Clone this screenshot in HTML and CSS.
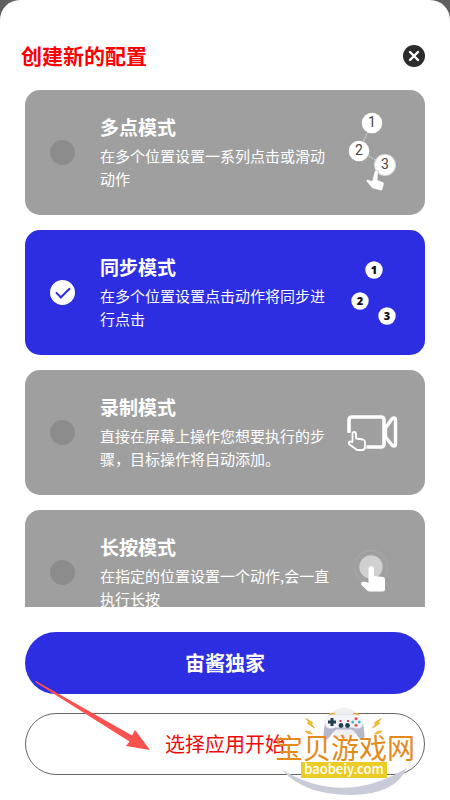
FILE: index.html
```
<!DOCTYPE html>
<html lang="zh-CN">
<head>
    <meta charset="UTF-8">
    <meta name="viewport" content="width=device-width, initial-scale=1.0">
    <title>创建新的配置</title>
    <link rel="stylesheet" href="styles.css">
</head>
<body>
    <form class="sheet">
        <div class="header">
            <h1>创建新的配置</h1>
            <button type="button" class="close" aria-label="关闭">
                <svg viewBox="0 0 22 22">
                    <circle cx="11" cy="11" r="11" fill="#2b2b2b"/>
                    <path d="M7 7l8 8M15 7l-8 8" stroke="#fff" stroke-width="2.4" stroke-linecap="round"/>
                </svg>
            </button>
        </div>

        <div class="modes">
            <label class="card">
                <input type="radio" name="mode" value="multi">
                <span class="text">
                    <span class="name">多点模式</span>
                    <span class="desc">在多个位置设置一系列点击或滑动动作</span>
                </span>
                <svg class="icon" viewBox="0 0 68 85">
                    <path d="M40 13L27 41L53 55" fill="none" stroke="#ddd" stroke-dasharray="2 1"/>
                    <circle cx="40" cy="13" r="10.3" fill="#fff"/>
                    <circle cx="27" cy="41" r="10.3" fill="#fff"/>
                    <circle cx="53" cy="55" r="11" fill="#ddd"/>
                    <circle cx="53" cy="55" r="10" fill="#fff"/>
                    <g class="thin-num">
                        <text x="40" y="17">1</text>
                        <text x="27" y="45">2</text>
                        <text x="53" y="59">3</text>
                    </g>
                    <path d="M42.500 61.500q1.500-2.500 3.700-.8l-.5 9.300 5.300 2q1.500.8 1 2.500l-1.500 5q-.5 1.500-2 1l-8-2-6-7q-1-2.500 1.500-2l4 1.500z" fill="#fff" stroke="#888" stroke-width=".4"/>
                </svg>
            </label>

            <label class="card">
                <input type="radio" name="mode" value="sync" checked>
                <span class="text">
                    <span class="name">同步模式</span>
                    <span class="desc">在多个位置设置点击动作将同步进行点击</span>
                </span>
                <svg class="icon" viewBox="0 0 68 85">
                    <circle cx="42" cy="20" r="8.700" fill="#fff"/>
                    <circle cx="28" cy="51" r="8.700" fill="#fff"/>
                    <circle cx="55" cy="66" r="8.700" fill="#fff"/>
                    <g class="bold-num">
                        <text x="42" y="24">1</text>
                        <text x="28" y="55">2</text>
                        <text x="55" y="70">3</text>
                    </g>
                </svg>
            </label>

            <label class="card">
                <input type="radio" name="mode" value="record">
                <span class="text">
                    <span class="name">录制模式</span>
                    <span class="desc">直接在屏幕上操作您想要执行的步骤，目标操作将自动添加。</span>
                </span>
                <svg class="icon" viewBox="0 0 68 85" fill="none" stroke="#fff" stroke-linejoin="round">
                    <path d="M17 43V30q0-3 3-3h29q3 0 3 3v24q0 3-3 3H34.500" stroke-width="3.600"/>
                    <path d="M53.500 38l6-8.500q1-1.500 2.500-1.500 1.500 0 1.500 2v24q0 2-1.500 2-1.500 0-2.500-1.500L53.500 47z" stroke-width="3.400"/>
                    <path d="M20.500 52V44q0-2 1.700-2t1.800 2v4.500l7 1q2 .5 2 2.500v5q0 3-3 3h-5l-8-6q-1-2.500 1.500-2.500l2.500 1" stroke-width="1.800"/>
                </svg>
            </label>

            <label class="card">
                <input type="radio" name="mode" value="press">
                <span class="text">
                    <span class="name">长按模式</span>
                    <span class="desc">在指定的位置设置一个动作,会一直执行长按</span>
                </span>
                <svg class="icon" viewBox="0 0 68 85">
                    <circle cx="39" cy="37" r="16.500" fill="none" stroke="#aaa" stroke-width=".8"/>
                    <circle cx="39" cy="37" r="11.700" fill="#d0d0d0"/>
                    <path d="M36.500 38.500a2.800 2.800 0 0 1 5.500 0V46l9 1q2 .3 2 2.500v9.500q0 2.500-2.500 2.500H37.500q-1 0-2-.8L29.500 55q-1.500-2.500 1.500-3.200 3-.3 5.500 1.200z" fill="#fff"/>
                </svg>
            </label>
        </div>

        <div class="actions">
            <button type="submit" class="primary">宙酱独家</button>
            <button type="button" class="outline">选择应用开始</button>

            <svg class="arrow" viewBox="0 0 116 70">
                <path d="M0 1L1 0L97 54.500L100 49L115 69L91 65L94.500 60.500z" fill="#fb5250"/>
            </svg>

            <svg class="logo" viewBox="0 0 140 100">
                <circle cx="69" cy="23" r="15.500" fill="#efeff1"/>
                <path d="M6 69Q67 107 132 68Q120 95 75 95Q29 95 6 69z" fill="#c9cbd9"/>
                <path d="M55 14.500h28q4.500 2 5 9 1.500 8 1.500 13 0 4-3 3.500-3-2-6-7-2-3-4-3.500H61.500q-2 .5-4 3.500-3 5-6 7-3 .5-3-3.500 0-5 1.500-13 .5-7 5-9z" fill="#b4b8ca"/>
                <path d="M56 14.500h26q6 1 6 8 0 6-6 6-2 0-4-1H60q-2 1-4 1-6 0-6-6 0-7 6-8z" fill="#f3f4f9"/>
                <path d="M54 14.300q3-1 6-.8M78 13.500q3-.2 6 .8" stroke="#e9ad42" stroke-width="1.600" fill="none"/>
                <path d="M57 18v8M53 22h8" stroke="#213f50" stroke-width="3"/>
                <circle cx="66" cy="25.500" r="2.400" fill="#213f50"/>
                <circle cx="72.500" cy="25.500" r="2.400" fill="#213f50"/>
                <path d="M64.500 21h2M72 21h2" stroke="#cf3e46" stroke-width="1.800"/>
                <circle cx="81" cy="18.700" r="1.500" fill="#e44d55"/>
                <circle cx="81" cy="25.300" r="1.500" fill="#e44d55"/>
                <circle cx="77.700" cy="22" r="1.500" fill="#41bac5"/>
                <circle cx="84.300" cy="22" r="1.500" fill="#41bac5"/>
                <path d="M31 18.500l6.500 4-1 1.500 3 4-7-4.500 1-1.500zM30 31l4.500.5 3 2.500-4.500-.5zM106.500 18.500l-7 4 1 1.500-3 4 7-4.500-1-1.500zM107 31l-4.500.5-3 2.500 4.500-.5z" fill="#f3c21f" stroke="#eba02a" stroke-width=".7"/>
                <text class="logo-name" x="0" y="59">宝贝游戏网</text>
                <rect x="26" y="62" width="86" height="16" fill="#ebcc26"/>
                <text class="logo-url" x="69" y="74">baobeiy.com</text>
            </svg>
        </div>
    </form>
</body>
</html>
```
FILE: styles.css
```
* {
    box-sizing: border-box;
}
body {
    font-family: "Noto Sans CJK SC", sans-serif;
    margin: 0;
    background-color: #606060;
}
.sheet {
    display: flex;
    flex-direction: column;
    height: 100vh;
    background-color: white;
    border-radius: 20px 20px 0 0;
}
.header {
    display: flex;
    justify-content: space-between;
    align-items: center;
    padding: 39px 25px 17px 21px;
}
h1 {
    margin: 0;
    padding-bottom: 2px;
    font-size: 21px;
    line-height: 32px;
    font-weight: 700;
    color: #fb0000;
}
button {
    font-family: inherit;
    cursor: pointer;
}
.close {
    width: 22px;
    height: 22px;
    padding: 0;
    border: none;
    background: none;
}
.close svg {
    display: block;
}
.modes {
    flex: 1;
    min-height: 0;
    display: flex;
    flex-direction: column;
    gap: 15px;
    margin: 0 25px;
    overflow-y: auto;
    scrollbar-width: none;
}
.card {
    flex: none;
    display: flex;
    align-items: center;
    min-height: 125px;
    padding: 0 25px;
    border-radius: 15px;
    background-color: #9f9f9f;
    color: white;
    cursor: pointer;
}
.card:has(input:checked) {
    background-color: #2d2de2;
}
.card input {
    appearance: none;
    flex: none;
    display: grid;
    place-items: center;
    width: 25px;
    height: 25px;
    margin: 0 25px 0 0;
    border-radius: 50%;
    background-color: #8c8c8c;
}
.card input:checked {
    background-color: white;
}
.card input:checked::after {
    content: "";
    box-sizing: border-box;
    width: 14px;
    height: 8px;
    margin-bottom: 4px;
    border: solid #2d2de2;
    border-width: 0 0 2px 2px;
    transform: rotate(-45deg);
}
.text {
    flex: 1;
    padding-bottom: 2px;
}
.name {
    display: block;
    margin-bottom: 3px;
    font-size: 19px;
    line-height: 28px;
    font-weight: 700;
}
.desc {
    display: block;
    font-size: 15px;
    line-height: 23px;
}
.icon {
    flex: none;
    width: 68px;
    height: 85px;
}
.thin-num {
    font: 14px Roboto, sans-serif;
    fill: #444;
    text-anchor: middle;
}
.bold-num {
    font: 800 11px "Open Sans", sans-serif;
    fill: #111;
    text-anchor: middle;
}
.actions {
    position: relative;
    display: flex;
    flex-direction: column;
    gap: 19px;
    padding: 25px;
}
.primary, .outline {
    height: 62px;
    padding: 0 0 2px;
    border-radius: 31px;
    font-size: 20px;
}
.primary {
    background-color: #2d2de2;
    border: none;
    color: white;
    font-weight: 700;
}
.outline {
    background-color: white;
    border: 1px solid #666;
    color: #f00808;
}
/* drawn over the buttons */
.arrow, .logo {
    position: absolute;
    pointer-events: none;
}
.arrow {
    left: 35px;
    bottom: 49px;
    width: 116px;
    height: 70px;
}
.logo {
    right: 35px;
    bottom: 0;
    width: 140px;
    height: 100px;
}
.logo-name {
    font-size: 28px;
    fill: #e48a1c;
}
.logo-url {
    font-size: 13px;
    font-weight: 500;
    fill: white;
    text-anchor: middle;
}
```
